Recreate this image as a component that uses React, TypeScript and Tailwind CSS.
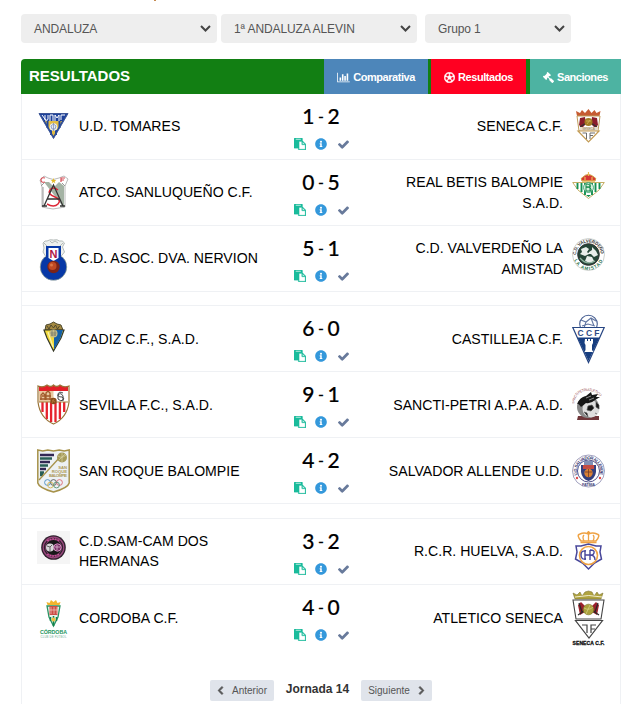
import type { ReactNode } from 'react'
import { FaChevronLeft, FaChevronRight, FaGavel, FaInfoCircle, FaRegFutbol } from 'react-icons/fa'

interface Match {
    home: string;
    away: string;
    score: string;
    homeCrest: ReactNode;
    awayCrest: ReactNode;
    homeClass?: string;
    awayClass?: string;
}

function Crest({ children }: { children: ReactNode }) {
    return (
        <svg viewBox="0 0 33 56" className="w-[33px] h-14 shrink-0" fontFamily="Liberation Sans, sans-serif">
            {children}
        </svg>
    )
}

/* ---------- crests ---------- */

const Tomares = (
    <Crest>
        <path d="M2 14.5H31L16.500 39.500Z" fill="#20469c" />
        <path d="M8 22H25L16.500 37Z" fill="#e3bd43" />
        <path d="M10.500 22v7M22.500 22v7M14 31v5M19 31v5" stroke="#20469c" strokeWidth="2" />
        <path d="M3.500 15.500H29.500L25.500 22H7.500Z" fill="#1d409a" />
        <path d="M5 16l4 5.500M8 16v5q3 1 3-1v-4M13 22v-6h3v6M18 22v-6l2 3 2-3v6M24 21v-5h4" stroke="#fff" strokeWidth="1" fill="none" />
        <circle cx="16.500" cy="28" r="3.800" fill="#e9edf4" />
        <path d="M14 27l2.500-2 2.500 2-1 3h-3zM16.500 24v8" stroke="#7486b0" strokeWidth=".7" fill="none" />
        <path d="M2 14.500H31L16.500 39.500Z" fill="none" stroke="#3d5595" strokeWidth="1" />
    </Crest>
)

const Sanluqueno = (
    <Crest>
        <path d="M5 22L3 15l4-4 4 2q5 3 11 0l5-2 4 3-3 7v21l-6 1-6 1-6-1-5-1Z" fill="#fff" stroke="#a8a8a8" strokeWidth=".8" />
        <path d="M7 17l20 26V21l-5-4-5 5-5-5Z" fill="#a4b3a4" />
        <path d="M4 21l3-3M28 21l-3-3M6 42V22" stroke="#999" />
        <path d="M8 13q-4-1-4 2t4 2M24 17v-4h4M24 15h3" stroke="#d54c55" strokeWidth="1.200" fill="none" />
        <path d="M16.500 13l.8 2h2l-1.600 1.200.6 2-1.800-1.200-1.800 1.200.6-2L13.700 15h2z" fill="#e5bd28" />
        <path d="M21 25q-5-4-8 0t5 7q7 3 3 7t-11 0" stroke="#dd2736" strokeWidth="1.500" fill="none" />
        <path d="M7 41l9.500-21L26 41M10 34h13M5 41h5M23 41h5" stroke="#333" strokeWidth="1.300" fill="none" />
    </Crest>
)

const Nervion = (
    <Crest>
        <circle cx="16.500" cy="36" r="13.300" fill="#0738a6" stroke="#a8b18d" strokeWidth=".6" />
        <path d="M6 12q2-3 4-2 3-2 6.500-1 4-1 6 1 3-1 5 2l-2 4 2 5-4 5H9l-3-5 1-4Z" fill="#edf0ee" stroke="#a5aca9" strokeWidth=".8" />
        <path d="M7 12l3 3M26 12l-3 3M13 10l2 2 3-2 3 2" stroke="#a5aca9" strokeWidth=".8" fill="none" />
        <path d="M9 15h15v12q-2 4-7.500 5Q10 31 9 27Z" fill="#0738a6" />
        <path d="M11.500 17h10v10l-5 3-5-3Z" fill="#fff" />
        <text x="16.500" y="26.500" fontSize="11" fontWeight="700" textAnchor="middle" fill="#ae1646">N</text>
        <circle cx="16.500" cy="36" r="6.200" fill="#7c2417" />
        <circle cx="15.500" cy="35" r="4" fill="#c04a24" />
        <circle cx="14.500" cy="34" r="1.500" fill="#dc7848" />
    </Crest>
)

const Cadiz = (
    <Crest>
        <path d="M8 19l1-5 4-1 3.500-2 3.500 2 4 1 2 5Z" fill="#a58a42" stroke="#4e492e" />
        <path d="M10 15l2 3 2-4 2.500 3 2-3 2 4 2-3" stroke="#3c3b29" fill="none" strokeWidth=".8" />
        <path d="M7 19h20l-3 8-7.500 13L10 27Z" fill="#f1d93b" stroke="#353725" strokeWidth="1.200" />
        <path d="M17 19h9l-2.500 8L17 38.500Z" fill="#1360a8" />
        <circle cx="16.500" cy="22.500" r="4" fill="#c8bd87" />
        <path d="M13.500 22h6M14 24h5M15 19v6M18 19v6" stroke="#6f7467" strokeWidth=".7" />
        <path d="M11 21l5 15" stroke="#faf3a8" strokeWidth="1.200" />
    </Crest>
)

const Sevilla = (
    <Crest>
        <path d="M1 9q5 2 9-1 4 3 6.500 0 3 3 6.500 0 4 3 9 1v16q-2 16-15.500 22Q3 41 1 25Z" fill="#fff" />
        <path d="M2 9q5 2 8-1 4 3 6.500 0 3 3 6.500 0 4 3 8 1v5H2Z" fill="#e31f28" />
        <path d="M2 14h14.500v11H2Z" fill="#e9c9a0" />
        <path d="M4 23v-5l2-2 2 2v5M9 23v-7l2-2 2 2v7M3 22h12M5 19h9" stroke="#a15b2c" strokeWidth="1.300" fill="none" />
        <path d="M26 16q-4-2-5 1t4 3q3 1 1 3t-5-1V18q3-3 5 1v5" stroke="#333" strokeWidth=".9" fill="none" />
        <path d="M5.500 25v10M9.800 25v17M14.100 25v20M18.500 25v20M22.900 25v17M27.200 25v10" stroke="#e6222d" strokeWidth="2.300" />
        <path d="M2 25h29" stroke="#a88140" />
        <circle cx="16.500" cy="24" r="3.200" fill="#8a4c1b" />
        <path d="M15 23l3 2M17 22l-2 4" stroke="#c58b46" strokeWidth=".6" />
        <path d="M1 9q5 2 9-1 4 3 6.500 0 3 3 6.500 0 4 3 9 1v16q-2 16-15.500 22Q3 41 1 25Z" fill="none" stroke="#9a7438" strokeWidth="1.200" />
    </Crest>
)

const SanRoque = (
    <Crest>
        <path d="M.8 7l5 1 5-1 5.700 1 5.700-1 5 1 5-1v33Q31 45 16.500 49 2 45 .8 40Z" fill="#edf1f4" stroke="#a7924a" strokeWidth="1.500" />
        <path d="M3 12h14M3 19h10M3 26h6" stroke="#332755" strokeWidth="2.700" />
        <path d="M3 15.500h12M3 22.500h8M3 29.500h4M3 32h3" stroke="#285e57" strokeWidth="2.300" />
        <path d="M2 37L24 13" stroke="#a7924a" strokeWidth="1.300" />
        <circle cx="25" cy="14.500" r="5" fill="#a59a59" />
        <path d="M21 13q4 3 8-1M22 17l6-6M25 10v9" stroke="#d8d2a2" strokeWidth=".7" fill="none" />
        <g fontSize="4.200" fontWeight="700" textAnchor="end" fill="#ad9a57">
            <text x="30" y="26">SAN</text>
            <text x="30" y="30">ROQUE</text>
            <text x="30" y="34" textLength="18">BALOMPIE</text>
        </g>
        <g fill="none" strokeWidth=".9">
            <circle cx="10.500" cy="39.500" r="2.900" stroke="#488cc2" />
            <circle cx="16.500" cy="39.500" r="2.900" stroke="#555" />
            <circle cx="22.500" cy="39.500" r="2.900" stroke="#dd6870" />
            <circle cx="13.500" cy="42" r="2.900" stroke="#d5b34b" />
            <circle cx="19.500" cy="42" r="2.900" stroke="#558e73" />
        </g>
    </Crest>
)

const SamCam = (
    <Crest>
        <path d="M0 7h33v33H0Z" fill="#f5f5f5" />
        <circle cx="16.500" cy="23.500" r="12.300" fill="#30212e" />
        <circle cx="16.500" cy="23.500" r="10.300" fill="none" stroke="#9a477d" strokeWidth="1.200" />
        <circle cx="16.500" cy="23.500" r="8" fill="#181719" stroke="#bc5599" strokeWidth=".6" />
        <path d="M10 17q6-4 13 0M10 30q6 4 13 0" stroke="#c94f99" strokeWidth="1.500" fill="none" strokeDasharray="2 .7" />
        <circle cx="13" cy="23.500" r="4" fill="#d9d7da" />
        <path d="M10 22l3 1 2-2M13 23v4" stroke="#555" strokeWidth=".9" fill="none" />
        <circle cx="20.500" cy="23.500" r="3.700" fill="#793467" stroke="#d591c2" />
        <path d="M18 23h5M20 21v5" stroke="#dfb7d4" strokeWidth=".8" />
    </Crest>
)

const Cordoba = (
    <Crest>
        <path d="M10.500 15l-1-3 3 1 1.500-3 2.500 2 2.500-2 1.500 3 3-1-1 3Z" fill="#f2b52e" />
        <path d="M10 16h13l-2 11-4.500 9L12 27Z" fill="#e8f1e9" stroke="#2a9363" strokeWidth="1.300" />
        <path d="M12.500 16h8v9h-8Z" fill="#cc4c46" />
        <path d="M14 17v7M17 17v7M20 17v7M12 20h9" stroke="#f0cbc0" strokeWidth=".7" />
        <path d="M13.500 27v4M16.500 26v10M19.500 27v4" stroke="#13834f" strokeWidth="1.500" />
        <circle cx="16.500" cy="29.500" r="2" fill="#eec343" />
        <text x="16.500" y="43.500" fontSize="5.300" fontWeight="700" textAnchor="middle" textLength="27" fill="#18945c">CÓRDOBA</text>
        <text x="16.500" y="47.500" fontSize="2.800" textAnchor="middle" textLength="26" fill="#6fae94">CLUB DE FUTBOL</text>
    </Crest>
)

const Seneca = (
    <Crest>
        <path d="M5 17L4 12l4 2 2-3 3 3 3.500-4 3 4 3-3 2 3 4-2-1 5Z" fill="#c65b32" />
        <path d="M5 17h23l-2 15H7Z" fill="#fff" stroke="#bf9c5b" />
        <path d="M8 19l5-1 1 7-4 4-3-3ZM25 19l-5-1-1 7 4 4 3-3Z" fill="#8b1d2b" />
        <path d="M8 28l6-4M25 28l-6-4" stroke="#333" strokeWidth="1.200" />
        <circle cx="16.500" cy="23" r="4" fill="#a27b23" />
        <path d="M14 22h5M15 25l3-4" stroke="#d4b55d" strokeWidth=".8" />
        <path d="M8 28h18v4H8Z" fill="#e8dcc9" />
        <path d="M6 32h21L16.500 43Z" fill="#fff" stroke="#c29a52" strokeWidth="1.200" />
        <path d="M14.500 40v-6h-4M18 40v-6h5M18 36.500h3" stroke="#6d6d6d" fill="none" />
        <text x="16.500" y="31" fontSize="3" textAnchor="middle" fill="#907c5c">SENECA</text>
    </Crest>
)

const Betis = (
    <Crest>
        <path d="M10 16q-2-3 1-4 5-5 11 0 3 1 1 4Z" fill="#d63735" stroke="#d1a042" />
        <path d="M13 15v-3M16.500 11V7M20 15v-3M10 16h13" stroke="#e8bd57" strokeWidth="1.200" />
        <path d="M.7 17.500H32.300L27 25l-10.500 8.500L6 25Z" fill="#fff" stroke="#bfa656" strokeWidth=".9" />
        <path d="M5.500 18v6M9.500 18v9M13 18v12M20 18v12M23.500 18v9M27.500 18v6" stroke="#159153" strokeWidth="1.900" />
        <circle cx="16.500" cy="22.500" r="5" fill="#d9f0df" stroke="#2d9b63" strokeWidth=".8" />
        <path d="M14 19v7M14 19q5 0 4 3h-4q6 0 5 4h-5M18 18v8" stroke="#168a4b" fill="none" />
        <path d="M14 30h5l-2.500 2Z" fill="#168a4b" />
    </Crest>
)

const Valverdeno = (
    <Crest>
        <defs>
            <path id="valv-top" d="M4 24a12.500 12.500 0 0 1 25 0" />
            <path id="valv-bottom" d="M1.500 24a15 15 0 0 0 30 0" />
        </defs>
        <circle cx="16.500" cy="23.500" r="16" fill="#fff" stroke="#b9beb9" strokeWidth=".7" />
        <circle cx="16.500" cy="23.500" r="10.800" fill="#254638" stroke="#333" />
        <g fontSize="4.500" fontWeight="700">
            <text fill="#343434"><textPath href="#valv-top" textLength="38">C.D. VALVERDEÑO</textPath></text>
            <text fill="#26724b"><textPath href="#valv-bottom" startOffset="5" textLength="36">LA AMISTAD</textPath></text>
        </g>
        <path d="M9 18l5-2 3 2-2 3 2 2-4 2-5-2 2-2ZM20 16l4 4 2 4-4 2-3-3-3 0 1-2 3-2ZM15 25l5 1 2 4-4 2-5-2Z" fill="#e9eeeb" />
        <path d="M8 27q7 8 15 3" stroke="#8fb19f" strokeWidth="1.300" fill="none" />
    </Crest>
)

const Castilleja = (
    <Crest>
        <circle cx="16.500" cy="13" r="8.800" fill="#fff" stroke="#455d91" strokeWidth="1.100" />
        <path d="M9 9l5 2 5-4 5 3M14 11l-2 6M19 7l3 8M10 15l6-2 7 2" stroke="#6377a2" strokeWidth="1.100" fill="none" />
        <path d="M.8 16.500H32.200L16.500 51.500Z" fill="#fff" stroke="#274683" strokeWidth="1.200" />
        <path d="M5.500 26.500H27.500L16.500 50Z" fill="#173e80" />
        <text x="16.500" y="25.200" fontSize="8.500" fontWeight="700" textAnchor="middle" textLength="22" fill="#304c85">CCF</text>
        <path d="M13 28h2v2h1v-2h2v2h1v-2h2v4l-1 2v5l1.500 2h-9l1-2v-5l-1-2Z" fill="#fff" />
    </Crest>
)

const SanctiPetri = (
    <Crest>
        <defs>
            <path id="sancti-arc" d="M2 27Q4 14 16 14T31 27" />
        </defs>
        <text fontSize="3.600" fill="#985156"><textPath href="#sancti-arc" textLength="35">SANCTI PETRI ATLETICO</textPath></text>
        <path d="M6 39h21v4H5Z" fill="#70373b" />
        <circle cx="16" cy="30" r="11" fill="#888" />
        <circle cx="19" cy="32" r="8.500" fill="#dedede" />
        <path d="M16 29l4-1 2 3-3 3-4-1ZM24 25l3 3v4l-3-2ZM12 35l3 1 1 4M23 36l2 1" fill="#161616" stroke="#555" strokeWidth=".7" />
        <path d="M5 27q3-7 9-8l5-4 1 3 6-1-2 3 4 0-5 3q-4 4-9 3l-5 4q-3-4-4-3Z" fill="#171717" />
        <path d="M14 21l5-2M17 23l5-2" stroke="#aaa" strokeWidth=".8" />
    </Crest>
)

const Allende = (
    <Crest>
        <defs>
            <path id="allende-arc" d="M5.500 32a11.700 11.700 0 1 1 22 0" />
        </defs>
        <circle cx="16.500" cy="28" r="16" fill="#fff" stroke="#7777a2" strokeWidth=".7" />
        <circle cx="16.500" cy="28" r="11" fill="#fff" stroke="#55558d" />
        <text fontSize="4.300" fontWeight="700" fill="#31316c"><textPath href="#allende-arc" textLength="44">U.D. SALVADOR ALLENDE</textPath></text>
        <text x="16.500" y="42.500" fontSize="3.800" fontWeight="700" textAnchor="middle" textLength="13" fill="#45457e">FATIMA</text>
        <circle cx="5" cy="35" r="1.200" fill="#e14b4b" /><circle cx="28" cy="35" r="1.200" fill="#e14b4b" />
        <path d="M9 22h15v7q-1 7-7.500 9Q10 36 9 29Z" fill="#343f7e" />
        <path d="M11 22h11v4H11Z" fill="#c44c43" /><path d="M12 18h9v4h-9Z" fill="#8190b6" />
        <circle cx="16.500" cy="30" r="4.200" fill="#da8034" />
        <path d="M13 29h7M16.500 26v8" stroke="#743b28" strokeWidth=".8" />
    </Crest>
)

const Huelva = (
    <Crest>
        <path d="M9 17q-5-6-1-7 4-2 8.500 0 4-2 8.500 0 4 1-1 7Z" fill="#fff" stroke="#efa345" strokeWidth="1.500" />
        <path d="M12 17q-2-4 0-6M16.500 17V9M21 17q2-4 0-6M16.500 7v3M15 8.500h3M8.500 18.500h16" stroke="#efa345" strokeWidth="1.300" fill="none" />
        <path d="M4 22l5 0 7.500-2 7.500 2h5l-1 6 1.500 7-7 4-6 6-6-6-7-4L5 28Z" fill="#fff" stroke="#48479a" strokeWidth="1.500" />
        <circle cx="16.500" cy="31.500" r="9" fill="#fff" stroke="#efa345" strokeWidth="1.600" />
        <path d="M14 27q-5-1-5 4t5 4M13 26v10M13 31h7M18 26v10M18 26q5 0 4 3t-4 2q5 0 5 5" stroke="#48479a" strokeWidth="1.400" fill="none" />
    </Crest>
)

const AtSeneca = (
    <Crest>
        <path d="M3 9L1 3l4 2 3-3 2 4 3-4 3.500-1 3.500 1 2 4 3-4 2 3 4-2-2 6Z" fill="#b0a33f" stroke="#7e7634" strokeWidth=".6" />
        <path d="M3 7q14-3 27 0" stroke="#f1edcb" fill="none" />
        <path d="M1 10h31l-3 19H4Z" fill="#fff" stroke="#444" strokeWidth="1.100" />
        <path d="M6 15l3-3 4 4v6l-5 3ZM27 15l-3-3-4 4v6l5 3Z" fill="#9b202b" />
        <path d="M6 25l9-6M27 25l-9-6M7 13l3 9M26 13l-3 9" stroke="#292929" strokeWidth="1.200" />
        <circle cx="16.500" cy="19.500" r="5.300" fill="#aba13c" stroke="#777128" strokeWidth=".6" />
        <path d="M12 18q5 3 9-1M14 24l4-9" stroke="#ddd488" strokeWidth=".7" fill="none" />
        <path d="M3.500 30.500H30.500L17 48Z" fill="#fff" stroke="#444" strokeWidth="1.200" />
        <path d="M10 35h5v8M15 35l-4 0M19 43v-8h5M19 39h4" stroke="#444" strokeWidth="1.200" fill="none" />
        <text x="16.500" y="54.500" fontSize="5" fontWeight="700" textAnchor="middle" textLength="32" fill="#111" stroke="#111" strokeWidth=".3">SENECA C.F.</text>
    </Crest>
)

/* ---------- small icons ---------- */

const PasteIcon = () => (
    <svg viewBox="0 0 1792 1792" className="w-3 h-3" fill="#1abc9c" stroke="#1abc9c" strokeWidth="40">
        <path d="M768 1664h896v-640h-416q-40 0-68-28t-28-68v-416h-384v1152zm256-1440v-64q0-13-9.500-22.500t-22.500-9.500h-704q-13 0-22.500 9.500t-9.500 22.500v64q0 13 9.500 22.500t22.500 9.500h704q13 0 22.500-9.500t9.500-22.500zm256 672h299l-299-299v299zm512 128v672q0 40-28 68t-68 28h-960q-40 0-68-28t-28-68v-160h-544q-40 0-68-28t-28-68v-1344q0-40 28-68t68-28h1088q40 0 68 28t28 68v328q21 13 36 28l408 408q28 28 48 76t20 88z" />
    </svg>
)

const CheckIcon = () => (
    <svg viewBox="121 300 1550 1230" className="w-[11px] h-[9px] mt-px" fill="#687a9b">
        <path d="M1671 566q0 40-28 68l-724 724-136 136q-28 28-68 28t-68-28l-136-136-362-362q-28-28-28-68t28-68l136-136q28-28 68-28t68 28l294 295 656-657q28-28 68-28t68 28l136 136q28 28 28 68z" />
    </svg>
)

const ChartIcon = () => (
    <svg viewBox="0 0 2048 1792" className="w-[13px] h-[11px]" fill="currentColor">
        <path d="M640 896v512h-256v-512h256zm384-512v1024h-256v-1024h256zm1024 1152v128h-2048v-1536h128v1408h1920zm-640-896v768h-256v-768h256zm384-384v1152h-256v-1152h256z" />
    </svg>
)

function Select({ label, className }: { label: string; className: string }) {
    return (
        <div className={`flex items-center justify-between h-[29px] pl-[13px] pr-[6px] rounded bg-[#eee] text-[12px] text-[#555] ${className}`}>
            <span className="tracking-[-0.1px]">{label}</span>
            <svg viewBox="0 0 11 7" className="w-[11px] h-[7px]" fill="none" stroke="#444" strokeWidth="2">
                <path d="M1 1l4.500 4.500L10 1" />
            </svg>
        </div>
    )
}

function MatchRow({ match }: { match: Match }) {
    const [home, away] = match.score.split('-')
    return (
        <div className="flex items-center h-[66px] pl-[15px] pr-[15px] border-b border-[#eff1f4]">
            {match.homeCrest}
            <div className={`w-[190px] ml-[9px] text-[14.1px] leading-5 text-black ${match.homeClass ?? ''}`}>{match.home}</div>
            <div className="w-[74px] ml-[15px] h-full flex flex-col items-center">
                <div className="h-[26px] mt-[9px] flex items-center gap-[3.500px] font-['Lato'] text-[21px] leading-[26px] font-medium text-black [-webkit-text-stroke:0.2px_black]">
                    <span>{home}</span>
                    <span className="text-[16px]">-</span>
                    <span>{away}</span>
                </div>
                <div className="flex items-center h-3 mt-[9px] ml-px">
                    <PasteIcon />
                    <FaInfoCircle className="w-3 h-3 ml-[9px] mr-[11px] text-[#3498db]" />
                    <CheckIcon />
                </div>
            </div>
            <div className={`flex-1 pl-[6px] mr-[9px] text-right text-[14.1px] leading-[21px] text-black ${match.awayClass ?? ''}`}>{match.away}</div>
            {match.awayCrest}
        </div>
    )
}

const groups: Match[][] = [
    [
        { home: 'U.D. TOMARES', away: 'SENECA C.F.', score: '1-2', homeCrest: Tomares, awayCrest: Seneca, homeClass: 'pb-0.5' },
        { home: 'ATCO. SANLUQUEÑO C.F.', away: 'REAL BETIS BALOMPIE S.A.D.', score: '0-5', homeCrest: Sanluqueno, awayCrest: Betis, homeClass: 'pb-0.5' },
        { home: 'C.D. ASOC. DVA. NERVION', away: 'C.D. VALVERDEÑO LA AMISTAD', score: '5-1', homeCrest: Nervion, awayCrest: Valverdeno, homeClass: 'pb-0.5' },
    ],
    [
        { home: 'CADIZ C.F., S.A.D.', away: 'CASTILLEJA C.F.', score: '6-0', homeCrest: Cadiz, awayCrest: Castilleja, awayClass: 'pt-0.5' },
        { home: 'SEVILLA F.C., S.A.D.', away: 'SANCTI-PETRI A.P.A. A.D.', score: '9-1', homeCrest: Sevilla, awayCrest: SanctiPetri, awayClass: 'pt-0.5' },
        { home: 'SAN ROQUE BALOMPIE', away: 'SALVADOR ALLENDE U.D.', score: '4-2', homeCrest: SanRoque, awayCrest: Allende, awayClass: 'pt-0.5' },
    ],
    [
        { home: 'C.D.SAM-CAM DOS HERMANAS', away: 'R.C.R. HUELVA, S.A.D.', score: '3-2', homeCrest: SamCam, awayCrest: Huelva, homeClass: 'pb-0.5' },
        { home: 'CORDOBA C.F.', away: 'ATLETICO SENECA', score: '4-0', homeCrest: Cordoba, awayCrest: AtSeneca, awayClass: 'pt-0.5' },
    ],
]

export default function App() {
    return (
        <div className="w-[625px] h-[704px] overflow-hidden bg-white pl-[21px] font-['Liberation_Sans',sans-serif]">
            <div className="h-[14px]">
                <div className="w-[2px] h-px ml-[133px] bg-[#c58a50]" />
            </div>

            <div className="flex">
                <Select label="ANDALUZA" className="w-[196px]" />
                <Select label="1ª ANDALUZA ALEVIN" className="w-[196px] ml-1" />
                <Select label="Grupo 1" className="w-[146px] ml-2" />
            </div>

            <div className="w-[600px] mt-4">
                <div className="flex h-[35px] rounded-tl-sm overflow-hidden bg-[#127f13] text-white">
                    <h2 className="w-[303px] pl-2 text-[15px] leading-[34px] font-bold">RESULTADOS</h2>
                    <div className="flex gap-[3px] text-[11px] tracking-[-0.45px] font-bold">
                        <div className="w-[104px] pt-0.5 flex items-center justify-center gap-[3px] bg-[#4d86ba]">
                            <ChartIcon />Comparativa
                        </div>
                        <div className="w-[95px] pt-0.5 flex items-center justify-center gap-[3px] bg-[#ff0021]">
                            <FaRegFutbol className="w-[11px] h-[11px]" stroke="currentColor" strokeWidth="20" />Resultados
                        </div>
                        <div className="w-[91px] pt-0.5 ml-px flex items-center justify-center gap-[3px] bg-[#4db3a2]">
                            <FaGavel className="w-[11px] h-[11px] -scale-x-100" />Sanciones
                        </div>
                    </div>
                </div>

                <div className="h-[610px] border-x border-[#eff1f4]">
                    {groups.map((group, i) => (
                        <div
                            key={i}
                            className={
                                i === 0 ? '' :
                                i === 1 ? 'mt-[13px] border-t border-[#eff1f4]' :
                                'mt-[14px] border-t border-[#eff1f4] [&>*:last-child]:border-transparent'
                            }
                        >
                            {group.map((match) => <MatchRow key={match.home} match={match} />)}
                        </div>
                    ))}

                    <div className="flex items-center mt-[29px] ml-[188px] text-[10px] text-[#555]">
                        <button className="flex items-center justify-center gap-[8px] w-16 h-[21px] rounded-[2px] bg-[#e0e4eb]">
                            <FaChevronLeft className="w-[7px] h-[9px]" stroke="currentColor" strokeWidth="50" />Anterior
                        </button>
                        <span className="w-[87px] -mt-1 text-center text-[12px] font-bold text-[#333]">Jornada 14</span>
                        <button className="flex items-center justify-center gap-[8px] w-[71px] h-[21px] rounded-[2px] bg-[#e0e4eb]">
                            Siguiente<FaChevronRight className="w-[7px] h-[9px]" stroke="currentColor" strokeWidth="50" />
                        </button>
                    </div>
                </div>
            </div>
        </div>
    )
}
